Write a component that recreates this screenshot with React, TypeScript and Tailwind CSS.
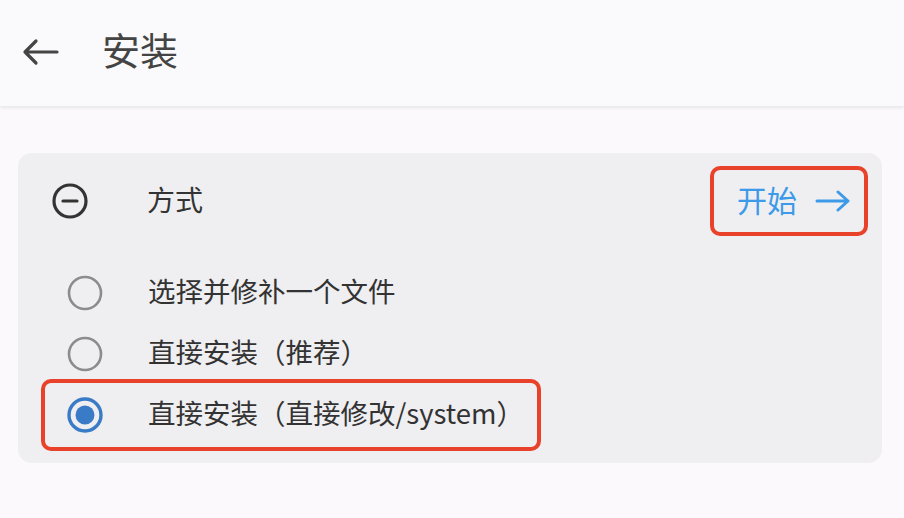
import { useState } from 'react';

const font = { fontFamily: '"Noto Sans CJK SC", "Noto Sans", sans-serif' };

const BackArrow = () => (
  <svg width="40" height="30" viewBox="0 0 40 30" fill="none">
    <path d="M5 15H37M5 15L16 4M5 15L16 26" stroke="#454545" strokeWidth="3.2" strokeLinecap="round" strokeLinejoin="round" />
  </svg>
);

const MinusCircle = () => (
  <svg width="38" height="38" viewBox="0 0 38 38" fill="none">
    <circle cx="19" cy="19" r="16" stroke="#333" strokeWidth="3.2" />
    <path d="M12 19H26" stroke="#333" strokeWidth="3.2" strokeLinecap="round" />
  </svg>
);

const Radio = ({ checked }: { checked?: boolean }) => (
  <svg width="38" height="38" viewBox="0 0 38 38" fill="none">
    {checked ? (
      <>
        <circle cx="19" cy="19" r="16" stroke="#3a7bc8" strokeWidth="3.4" />
        <circle cx="19" cy="19" r="9.5" fill="#3a7bc8" />
      </>
    ) : (
      <circle cx="19" cy="19" r="16" stroke="#8c8c8c" strokeWidth="2.6" />
    )}
  </svg>
);

const OPTIONS = ['选择并修补一个文件', '直接安装（推荐）', '直接安装（直接修改/system）'];

export default function App() {
  const [selected, setSelected] = useState(2);

  return (
    <div className="w-[904px] h-[518px] bg-[#fbf9fc] overflow-hidden" style={font}>
      {/* Top bar */}
      <div className="h-[106px] bg-[#faf9fb] flex items-center pb-[3px] shadow-[0_2px_3px_rgba(0,0,0,0.08)]">
        <div className="ml-[20px] w-[40px] flex items-center">
          <BackArrow />
        </div>
        <div className="ml-[42px] pb-[5px] text-[38px] text-[#444] leading-none">安装</div>
      </div>

      {/* Card */}
      <div className="mt-[47px] ml-[18px] mr-[22px] h-[310px] rounded-[14px] bg-[#efeef1]">
        <div className="h-[96px] flex items-center">
          <div className="ml-[33px] w-[38px] flex">
            <MinusCircle />
          </div>
          <div className="ml-[58px] pb-[5px] text-[28px] text-[#333] leading-none">方式</div>
          <div className="ml-auto mr-[14px] relative">
            <div className="w-[158px] h-[70px] flex items-center pl-[27px] gap-[18px] text-[#3d9ae8] text-[30px] leading-none">
              <span className="pb-[5px]">开始</span>
              <svg width="36" height="22" viewBox="0 0 36 22" fill="none">
                <path d="M2 11H33M33 11L23 2M33 11L23 20" stroke="#3d9ae8" strokeWidth="3" strokeLinecap="round" strokeLinejoin="round" />
              </svg>
            </div>
            <div className="absolute inset-0 rounded-[10px] border-[4px] border-[#e8422b]" />
          </div>
        </div>

        <div className="flex flex-col pt-[13px]">
          {OPTIONS.map((label, i) => (
            <div key={label} className="relative h-[61px] flex items-center cursor-pointer" onClick={() => setSelected(i)}>
              <div className="ml-[48px] w-[38px] flex">
                <Radio checked={selected === i} />
              </div>
              <div className="ml-[44px] pb-[4px] text-[27.5px] text-[#333] leading-none">{label}</div>
              {i === 2 && (
                <div className="absolute left-[23px] top-[-5px] w-[500px] h-[72px] rounded-[10px] border-[4px] border-[#e8422b]" />
              )}
            </div>
          ))}
        </div>
      </div>
    </div>
  );
}
